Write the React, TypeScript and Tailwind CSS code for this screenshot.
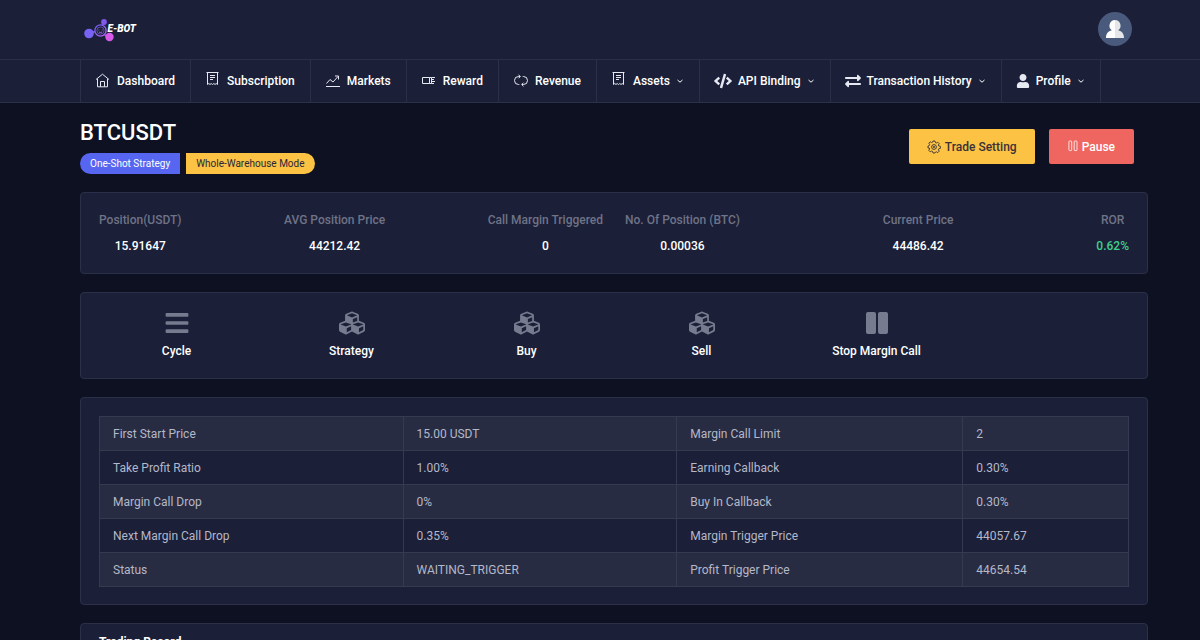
import { ReactNode } from "react";
import { FaBars, FaCode, FaCubes, FaExchangeAlt, FaUser } from "react-icons/fa";

const HomeIcon = () => (
  <svg className="size-4" viewBox="0 0 16 16" fill="none" stroke="currentColor" strokeWidth="1">
    <path d="M1 6.500 7.500 1.200 14 6.500M2.500 5.800v8h10v-8M5.500 13.800V8.500h4v5.300" />
  </svg>
);

const ReceiptIcon = () => (
  <svg className="mb-1 size-4" viewBox="0 0 16 16" fill="none" stroke="currentColor" strokeWidth="1">
    <path d="M2.500 13.500v-12h10v12M1.500 1.500h12M2.500 13.500l1.300-1 1.200 1 1.200-1 1.300 1 1.300-1 1.200 1 1.200-1 1.300 1M5 4.500h5M5 6.500h5M5 8.500h3" />
  </svg>
);

const MarketIcon = () => (
  <svg className="size-4" viewBox="0 0 16 16" fill="none" stroke="currentColor" strokeWidth="1">
    <path d="M1 13.500h14M1.500 10.500 5 6.500l3 2.500 5-5.500M10 3h3.500v3.500" />
  </svg>
);

const RewardIcon = () => (
  <svg className="size-4" viewBox="0 0 16 16" fill="none" stroke="currentColor" strokeWidth="1">
    <path d="M1.500 4.500h7v6h-7zM8.500 4.500h2v6h-2M10.500 4.500h3.500M10.500 6.500h2.500M10.500 8.500h3.500M10.500 10.500H13" />
  </svg>
);

const RevenueIcon = () => (
  <svg className="size-4" viewBox="0 0 16 16" fill="none" stroke="currentColor" strokeWidth="1">
    <path d="M7 3.500H5.500a4 4 0 0 0 0 8h.8M9 11.500h1.500a4 4 0 0 0 0-8h-.8M5.500 1.700 7.300 3.500 5.500 5.300M10.500 9.700 8.700 11.500l1.800 1.800" />
  </svg>
);

const ChevronIcon = () => (
  <svg className="size-2" viewBox="0 0 8 8" fill="none" stroke="currentColor" strokeWidth="1">
    <path d="m1.500 3 2.500 2.200L6.500 3" />
  </svg>
);

const GearIcon = () => (
  <svg className="size-3.5" viewBox="0 0 14 14" fill="none" stroke="currentColor" strokeWidth="0.9">
    <path d="M6 1h2l.4 1.600 1 .4 1.400-.8 1.400 1.400-.8 1.400.4 1 1.600.4v2l-1.600.4-.4 1 .8 1.400-1.400 1.400-1.400-.8-1 .4L8 13H6l-.4-1.600-1-.4-1.400.8-1.400-1.400.8-1.400-.4-1L1 8V6l1.200-.4.4-1-.8-1.400 1.400-1.400 1.400.8 1-.4z" />
    <circle cx="7" cy="7" r="2.400" />
    <circle cx="7" cy="7" r="0.700" />
  </svg>
);

const PauseOutline = () => (
  <svg className="mb-0.5 h-3 w-2.5" viewBox="0 0 10 12" fill="none" stroke="currentColor" strokeWidth="0.8">
    <rect x="0.9" y="1" width="2.800" height="9.600" rx="0.8" />
    <rect x="6.200" y="1" width="2.800" height="9.600" rx="0.8" />
  </svg>
);

const PauseSolid = () => (
  <svg className="size-6" viewBox="0 0 24 24" fill="currentColor">
    <rect x="1" y="1" width="10" height="22" rx="2" />
    <rect x="13" y="1" width="10" height="22" rx="2" />
  </svg>
);

const Logo = () => (
  <a href="#" className="flex items-center text-white" aria-label="E-BOT">
    <svg className="h-7 w-16" viewBox="0 0 64 28">
      <defs>
        <linearGradient id="node" x1="0" y1="0" x2="1" y2="1">
          <stop offset="0" stopColor="#6a5cf5" />
          <stop offset="1" stopColor="#b765ee" />
        </linearGradient>
      </defs>
      <g stroke="#8b5cf0" strokeWidth="1.500">
        <path d="M9 17.500 15 15.500M22 10.500 24 6M24 18l4 4" />
      </g>
      <circle cx="9" cy="17.500" r="4.800" fill="#7764f5" />
      <circle cx="24" cy="6" r="2.900" fill="#8058ea" />
      <circle cx="29.500" cy="21" r="4.200" fill="#d75be8" />
      <circle cx="20.500" cy="14.500" r="5.600" fill="#1b1f38" stroke="url(#node)" strokeWidth="1.300" />
      <circle cx="20.500" cy="14.500" r="3.600" fill="none" stroke="#6d50b8" strokeWidth="0.900" />
      <path d="M18.500 14h.8M21.800 14h.8M19 16q1.500 1 3 0" fill="none" stroke="#9668ee" />
      <text x="27.500" y="15.500" fill="currentColor" fontFamily="Roboto, sans-serif" fontSize="10" fontStyle="italic" fontWeight="900">
        E-BOT
      </text>
    </svg>
  </a>
);

type NavItem = {
  label: string;
  icon: ReactNode;
  menu?: boolean;
};

const navItems: NavItem[] = [
  { label: "Dashboard", icon: <HomeIcon /> },
  { label: "Subscription", icon: <ReceiptIcon /> },
  { label: "Markets", icon: <MarketIcon /> },
  { label: "Reward", icon: <RewardIcon /> },
  { label: "Revenue", icon: <RevenueIcon /> },
  { label: "Assets", icon: <ReceiptIcon />, menu: true },
  { label: "API Binding", icon: <FaCode className="h-4 w-[18px]" />, menu: true },
  { label: "Transaction History", icon: <FaExchangeAlt className="size-4" />, menu: true },
  { label: "Profile", icon: <FaUser className="size-3.5" />, menu: true },
];

const stats = [
  [
    { label: "Position(USDT)", value: "15.91647" },
    { label: "AVG Position Price", value: "44212.42" },
    { label: "Call Margin Triggered", value: "0" },
  ],
  [
    { label: "No. Of Position (BTC)", value: "0.00036" },
    { label: "Current Price", value: "44486.42" },
    { label: "ROR", value: "0.62%", up: true },
  ],
];

const actions = [
  { label: "Cycle", icon: <FaBars className="size-[26px]" /> },
  { label: "Strategy", icon: <FaCubes className="size-[26px]" /> },
  { label: "Buy", icon: <FaCubes className="size-[26px]" /> },
  { label: "Sell", icon: <FaCubes className="size-[26px]" /> },
  { label: "Stop Margin Call", icon: <PauseSolid /> },
];

const rows = [
  ["First Start Price", "15.00 USDT", "Margin Call Limit", "2"],
  ["Take Profit Ratio", "1.00%", "Earning Callback", "0.30%"],
  ["Margin Call Drop", "0%", "Buy In Callback", "0.30%"],
  ["Next Margin Call Drop", "0.35%", "Margin Trigger Price", "44057.67"],
  ["Status", "WAITING_TRIGGER", "Profit Trigger Price", "44654.54"],
];

const Card = ({ className = "", children }: { className?: string; children: ReactNode }) => (
  <section className={`rounded-sm border border-[#2b3048] bg-[#1b1f38] ${className}`}>{children}</section>
);

const Header = () => (
  <header className="bg-[#1b1f38]">
    <div className="flex h-[59px] items-center justify-between pr-17 pl-20">
      <Logo />
      <button type="button" aria-label="Account" className="mb-0.5 size-[34px] overflow-hidden rounded-full bg-[#4a5a7c]">
        <svg viewBox="0 0 34 34">
          <path d="M17 8a5.700 5.700 0 0 0-3.200 10.300C10 19.200 8 21.800 8 26h9z" fill="#ffffff" />
          <path d="M17 8a5.700 5.700 0 0 1 3.200 10.300C24 19.200 26 21.800 26 26h-9z" fill="#e4e6e8" />
        </svg>
      </button>
    </div>
    <nav className="border-y border-[#2b3048] pl-20">
      <ul className="flex h-[42px] w-fit border-x border-[#2b3048] text-[12px] font-medium text-white">
        {navItems.map((item) => (
          <li key={item.label} className="border-r border-[#2b3048] last:border-r-0">
            <a href="#" className="flex h-full items-center gap-1.5 pr-[15px] pl-3.5 whitespace-nowrap">
              <span className="text-[#e6e8f2]">{item.icon}</span>
              {item.label}
              {item.menu && <ChevronIcon />}
            </a>
          </li>
        ))}
      </ul>
    </nav>
  </header>
);

export default function App() {
  return (
    <div className="min-h-screen bg-[#0e1122] font-[Roboto,sans-serif] text-white">
      <Header />
      <main className="flex flex-col pr-[52px] pb-5 pl-20">
        <div className="flex justify-between pt-4 pb-[18px]">
          <div>
            <h1 className="text-[22px] leading-7 font-medium">BTCUSDT</h1>
            <div className="mt-1.5 flex gap-1.5 text-[10px] leading-[21px]">
              <span className="rounded-l-full bg-[#5666f0] px-2.5">One-Shot Strategy</span>
              <span className="rounded-r-full bg-[#fbc244] px-2.5 text-[#2a2638]">Whole-Warehouse Mode</span>
            </div>
          </div>
          <div className="mt-2.5 flex h-[35px] gap-3.5 pr-3.5 text-[12px] font-medium">
            <button type="button" className="flex items-center gap-1 rounded-xs bg-[#fbc244] px-[18px] text-[#3a3238]">
              <GearIcon />
              Trade Setting
            </button>
            <button type="button" className="flex items-center gap-1 rounded-xs bg-[#ef6560] px-[19px]">
              <PauseOutline />
              Pause
            </button>
          </div>
        </div>

        <Card className="grid grid-cols-2 gap-[22px] p-[18px]">
          {stats.map((group, i) => (
            <dl key={i} className="flex justify-between text-center text-[12px] leading-[18px] font-medium">
              {group.map((stat) => (
                <div key={stat.label}>
                  <dt className="text-[#6f7386]">{stat.label}</dt>
                  <dd className={`mt-2 ${stat.up ? "text-[#3fd08c]" : "text-white"}`}>{stat.value}</dd>
                </div>
              ))}
            </dl>
          ))}
        </Card>

        <Card className="mt-[18px] grid grid-cols-6 px-2 pt-4 pb-[18px]">
          {actions.map((action) => (
            <button key={action.label} type="button" className="flex flex-col items-center text-[12px] leading-[18px] font-medium">
              <span className="flex h-7 items-center text-[#777b8f]">{action.icon}</span>
              <span className="mt-[5px]">{action.label}</span>
            </button>
          ))}
        </Card>

        <Card className="mt-[18px] px-[18px] pt-[18px] pb-[17px]">
          <table className="w-full table-fixed border-collapse text-left text-[12px] leading-4 text-[#b4b8c8]">
            <colgroup>
              <col className="w-[29.5%]" />
              <col className="w-[26.6%]" />
              <col className="w-[27.8%]" />
              <col />
            </colgroup>
            <tbody>
              {rows.map((row) => (
                <tr key={row[0]} className="odd:bg-[#282c43]">
                  {row.map((cell, i) => (
                    <td key={i} className="h-[34px] border border-[#363a51] px-[13px]">
                      {cell}
                    </td>
                  ))}
                </tr>
              ))}
            </tbody>
          </table>
        </Card>

        <Card className="mt-[18px] px-[18px] py-2.5">
          <h2 className="text-[12px] leading-4 font-bold">Trading Record</h2>
        </Card>
      </main>
    </div>
  );
}
